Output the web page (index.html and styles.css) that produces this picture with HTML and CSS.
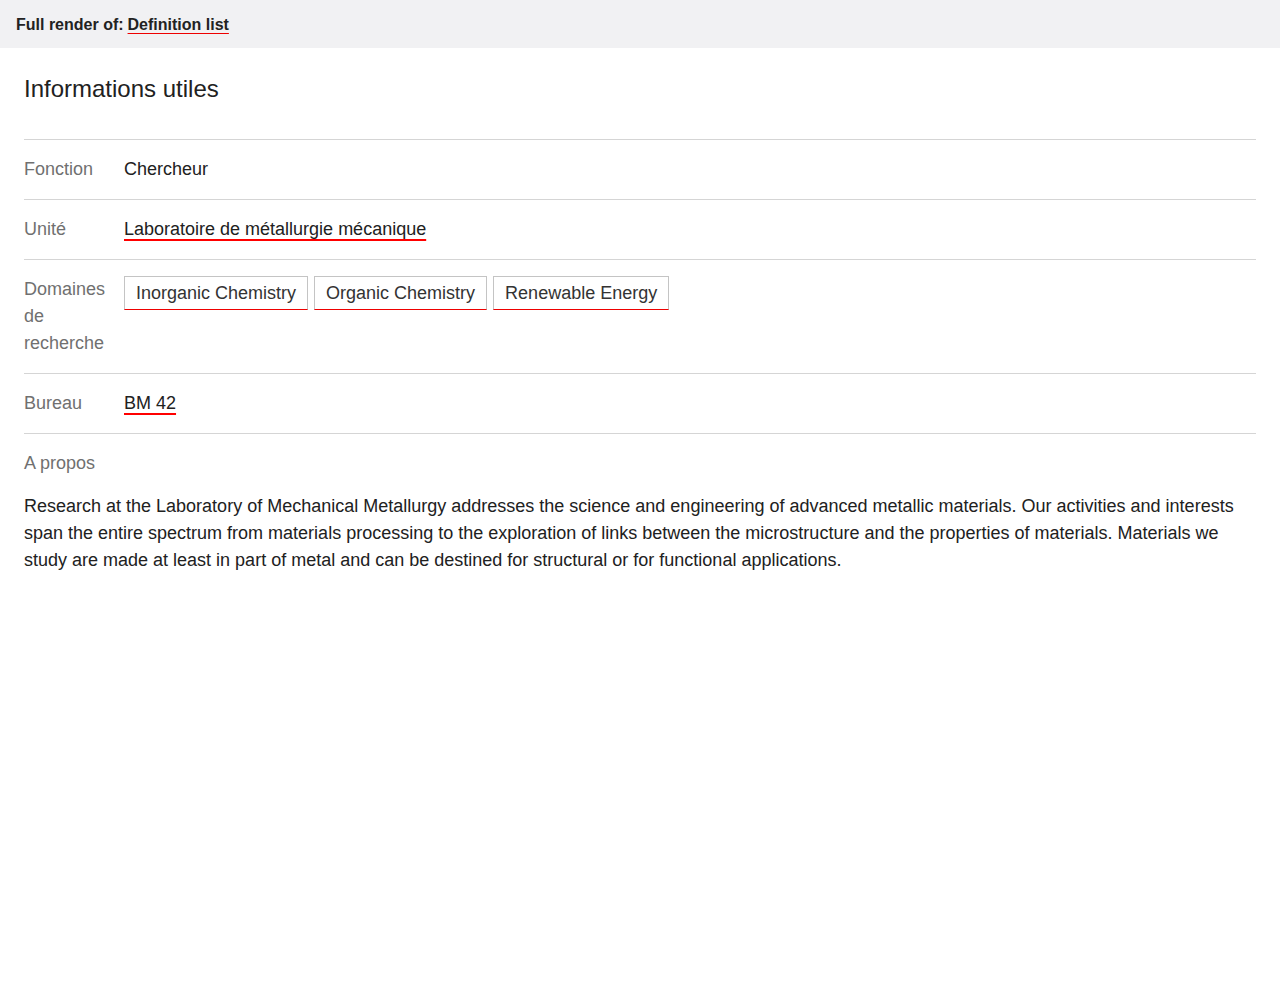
FILE: index.html
```html
<!DOCTYPE html>
<html lang="fr">
<head>
<meta charset="utf-8">
<title>Definition list</title>
<link rel="stylesheet" href="styles.css">
</head>
<body>
<header class="topbar">Full render of: <a class="topbar-link" href="#">Definition list</a></header>
<main class="content">
  <h2 class="title">Informations utiles</h2>
  <dl class="deflist">
    <div class="row">
      <dt class="label">Fonction</dt>
      <dd class="value">Chercheur</dd>
    </div>
    <div class="row">
      <dt class="label">Unité</dt>
      <dd class="value"><a class="link" href="#">Laboratoire de métallurgie mécanique</a></dd>
    </div>
    <div class="row">
      <dt class="label">Domaines de recherche</dt>
      <dd class="value tags">
        <span class="tag">Inorganic Chemistry</span>
        <span class="tag">Organic Chemistry</span>
        <span class="tag">Renewable Energy</span>
      </dd>
    </div>
    <div class="row">
      <dt class="label">Bureau</dt>
      <dd class="value"><a class="link" href="#">BM 42</a></dd>
    </div>
    <div class="row stacked">
      <dt class="label">A propos</dt>
      <dd class="value about">Research at the Laboratory of Mechanical Metallurgy addresses the science and engineering of advanced metallic materials. Our activities and interests span the entire spectrum from materials processing to the exploration of links between the microstructure and the properties of materials. Materials we study are made at least in part of metal and can be destined for structural or for functional applications.</dd>
    </div>
  </dl>
</main>
</body>
</html>
```
FILE: styles.css
```css
html, body {
  margin: 0;
  padding: 0;
  background: #fff;
  font-family: "Liberation Sans", Arial, sans-serif;
  color: #212121;
}
.topbar {
  height: 48px;
  box-sizing: border-box;
  padding: 1px 16px 0;
  display: flex;
  align-items: center;
  gap: 4px;
  background: #f1f1f3;
  font-size: 16px;
  font-weight: bold;
  color: #222;
}
.topbar-link {
  color: #222;
  text-decoration: underline;
  text-decoration-color: #e00;
  text-decoration-thickness: 1px;
  text-underline-offset: 3px;
}
.content {
  padding: 24px 24px 0;
}
.title {
  margin: 0 0 33px;
  font-size: 24px;
  line-height: 34px;
  font-weight: normal;
  color: #212121;
}
.deflist {
  margin: 0;
  font-size: 18px;
  line-height: 27px;
}
.row {
  display: flex;
  border-top: 1px solid #d5d5d5;
  padding: 16px 0;
}
.row.stacked {
  flex-direction: column;
  gap: 16px;
}
.label {
  width: 100px;
  flex: none;
  color: #707070;
}
.value {
  margin: 0;
  color: #212121;
}
.link {
  color: #212121;
  text-decoration: underline;
  text-decoration-color: #f00;
  text-decoration-thickness: 2px;
  text-underline-offset: 4px;
}
.tags {
  display: flex;
  flex-wrap: wrap;
  gap: 6px;
  align-items: flex-start;
}
.tag {
  display: inline-block;
  padding: 3px 11px 2px;
  border: 1px solid #c4c4c4;
  border-bottom: 1px solid #e00;
  color: #333;
  line-height: 27px;
}
.about {
  line-height: 27px;
}
```
